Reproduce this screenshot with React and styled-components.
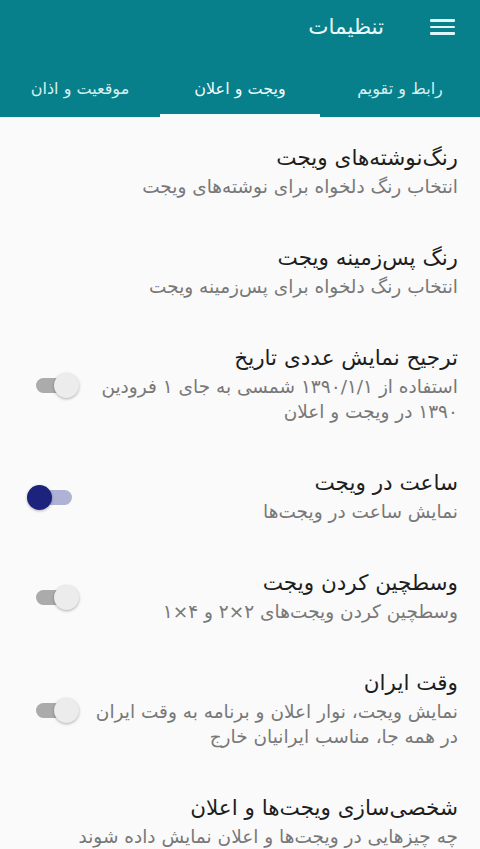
import React from "react";
import styled, { createGlobalStyle } from "styled-components";

const Global = createGlobalStyle`
  html, body { margin: 0; padding: 0; background: #fafafa; }
  body { font-family: "DejaVu Sans", "Noto Sans", sans-serif; }
  * { box-sizing: border-box; }
`;

const Page = styled.div`
  direction: rtl;
  width: 480px;
  height: 849px;
  overflow: hidden;
  background: #fafafa;
  display: flex;
  flex-direction: column;
`;

const Header = styled.header`
  background: #07808b;
  display: flex;
  flex-direction: column;
`;

const Toolbar = styled.div`
  height: 56px;
  display: flex;
  align-items: center;
  padding-right: 25px;
  gap: 46px;
`;

const MenuButton = styled.div`
  width: 25px;
  display: flex;
  flex-direction: column;
  gap: 4px;
  padding-bottom: 2px;
`;

const MenuLine = styled.span`
  display: block;
  height: 2.5px;
  background: #dff6f8;
  border-radius: 1px;
`;

const Title = styled.h1`
  margin: 0;
  font-size: 21.5px;
  font-weight: normal;
  color: #eaf8f9;
  line-height: 1;
  padding-bottom: 2px;
`;

const Tabs = styled.nav`
  height: 61px;
  display: grid;
  grid-template-columns: repeat(3, 1fr);
`;

const Tab = styled.div`
  display: flex;
  align-items: center;
  justify-content: center;
  padding-top: 6px;
  font-size: 16px;
  color: ${(p) => (p.$active ? "#f2fbfc" : "#d6eff1")};
  border-bottom: 3px solid ${(p) => (p.$active ? "#f4fdfe" : "transparent")};
`;

const List = styled.main`
  display: flex;
  flex-direction: column;
`;

const Item = styled.div`
  display: flex;
  align-items: center;
  gap: 20px;
  padding: 25px 22px 18px 27px;
`;

const Texts = styled.div`
  flex: 1 1 auto;
  min-width: 0;
  display: flex;
  flex-direction: column;
`;

const ItemTitle = styled.div`
  font-size: 21.5px;
  line-height: 32px;
  color: #1e1e1e;
  white-space: nowrap;
`;

const ItemSub = styled.div`
  font-size: 18.5px;
  line-height: 25px;
  color: #787878;
  white-space: nowrap;
`;

const SwitchSlot = styled.div`
  flex: none;
  padding-top: 4px;
`;

const SwitchBox = styled.div`
  position: relative;
  width: 53px;
  height: 26px;
  display: flex;
  align-items: center;
`;

const Track = styled.div`
  position: absolute;
  left: 9px;
  width: 36px;
  height: 15px;
  border-radius: 8px;
  background: ${(p) => (p.$on ? "#aeb3d6" : "#ababab")};
`;

const Thumb = styled.div`
  position: absolute;
  left: ${(p) => (p.$on ? "0px" : "27px")};
  width: 25px;
  height: 25px;
  border-radius: 50%;
  background: ${(p) => (p.$on ? "#1b237c" : "#ececec")};
  box-shadow: 0 1px 3px rgba(0, 0, 0, 0.3);
`;

const Switch = ({ on }) => (
  <SwitchBox>
    <Track $on={on} />
    <Thumb $on={on} />
  </SwitchBox>
);

const items = [
  { t: "رنگ‌نوشته‌های ویجت", s: ["انتخاب رنگ دلخواه برای نوشته‌های ویجت"] },
  { t: "رنگ پس‌زمینه ویجت", s: ["انتخاب رنگ دلخواه برای پس‌زمینه ویجت"] },
  {
    t: "ترجیح نمایش عددی تاریخ",
    s: ["استفاده از ۱۳۹۰/۱/۱ شمسی به جای ۱ فرودین", "۱۳۹۰ در ویجت و اعلان"],
    sw: "off",
  },
  { t: "ساعت در ویجت", s: ["نمایش ساعت در ویجت‌ها"], sw: "on" },
  { t: "وسطچین کردن ویجت", s: ["وسطچین کردن ویجت‌های ۲×۲ و ۴×۱"], sw: "off" },
  {
    t: "وقت ایران",
    s: ["نمایش ویجت، نوار اعلان و برنامه به وقت ایران", "در همه جا، مناسب ایرانیان خارج"],
    sw: "off",
  },
  { t: "شخصی‌سازی ویجت‌ها و اعلان", s: ["چه چیزهایی در ویجت‌ها و اعلان نمایش داده شوند"] },
];

export default function App() {
  return (
    <>
      <Global />
      <Page>
        <Header>
          <Toolbar>
            <MenuButton>
              <MenuLine />
              <MenuLine />
              <MenuLine />
            </MenuButton>
            <Title>تنظیمات</Title>
          </Toolbar>
          <Tabs>
            <Tab>رابط و تقویم</Tab>
            <Tab $active>ویجت و اعلان</Tab>
            <Tab>موقعیت و اذان</Tab>
          </Tabs>
        </Header>
        <List>
          {items.map((it, i) => (
            <Item key={i}>
              <Texts>
                <ItemTitle>{it.t}</ItemTitle>
                {it.s.map((line, j) => (
                  <ItemSub key={j}>{line}</ItemSub>
                ))}
              </Texts>
              {it.sw && (
                <SwitchSlot>
                  <Switch on={it.sw === "on"} />
                </SwitchSlot>
              )}
            </Item>
          ))}
        </List>
      </Page>
    </>
  );
}
